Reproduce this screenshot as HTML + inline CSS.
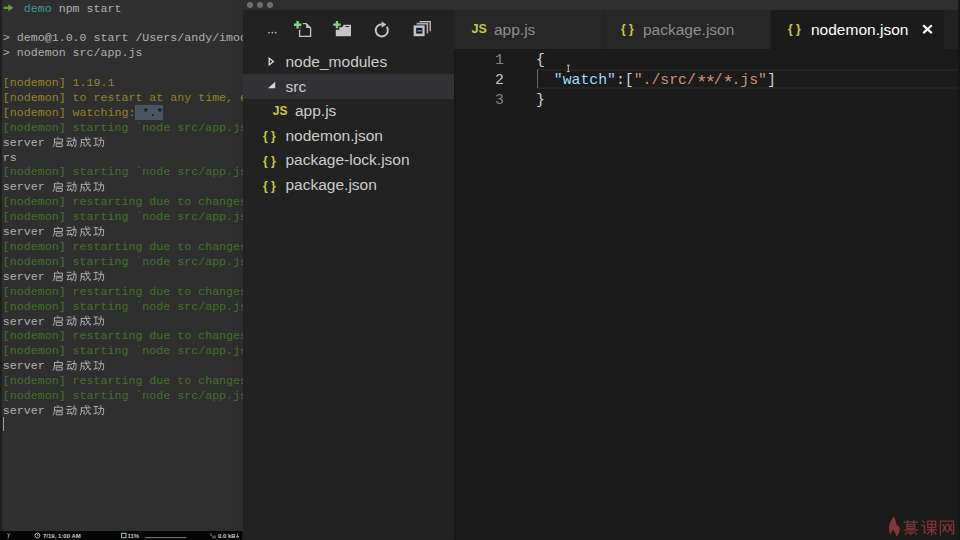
<!DOCTYPE html>
<html><head><meta charset="utf-8">
<style>
html,body{margin:0;padding:0}
body{width:960px;height:540px;overflow:hidden;position:relative;background:#1e1e1e;font-family:"Liberation Sans",sans-serif}
.abs{position:absolute}
#term{left:0;top:0;width:243px;height:531px;background:#2f2f2f;overflow:hidden}
#term .strip{left:0;top:0;width:2px;height:531px;background:#1f1f1f}
#term .shade{left:233px;top:0;width:10px;height:531px;background:rgba(0,0,0,0.03)}
#term pre{position:absolute;left:2.85px;top:1.5px;margin:0;font-family:"Liberation Mono",monospace;font-size:11.63px;line-height:14.9px;color:#b0b0b0;white-space:pre}
.g{color:#437228}.y{color:#948429}.tl{color:#3d9a98}
.hl{background:#4a5462;color:#0a0a0a;padding:1px 0}
.cj{display:inline-block;width:14px;height:10px}
#sbar{left:0;top:531px;width:242px;height:9px;background:#050505;color:#c8c8c8;font-size:6px;font-weight:bold;line-height:10px;white-space:nowrap}
#vs{left:243px;top:0;width:717px;height:540px;background:#1e1e1e}
#title{left:0;top:0;width:717px;height:10px;background:#2e2e2e}
.dot{width:6px;height:6px;border-radius:50%;background:#6e6e6e;top:1.5px}
#side{left:0;top:10px;width:211px;height:530px;background:#222222}
.row{left:0;width:211px;height:25px;color:#cccccc;font-size:15.5px;white-space:nowrap}
.row span.t{position:absolute;left:42.5px;top:4.5px}
#tabs{left:211px;top:10px;width:506px;height:39px;background:#222222}
.tab{top:0;height:39px;background:#272727;font-size:15.5px;color:#8d8d8d;white-space:nowrap}
#editor{left:211px;top:49px;width:506px;height:491px;background:#1b1b1b;box-shadow:inset 2px 0 2px -1px rgba(0,0,0,0.25)}
.code{position:absolute;font-family:"Liberation Mono",monospace;font-size:14.8px;line-height:20px;white-space:pre}
.ast{display:inline-block;width:8.88px;text-align:center;font-size:19px;line-height:10px;position:relative;top:4px}
.ic{position:absolute;font-weight:bold;color:#cbcb41;white-space:pre}
</style></head><body>
<div id="term" class="abs">
<div class="abs strip"></div>
<div class="abs shade"></div>
<pre>   <span class="tl">demo</span> npm start

&gt; demo@1.0.0 start /Users/andy/imooc/node
&gt; nodemon src/app.js

<span class="y">[nodemon] 1.19.1</span>
<span class="y">[nodemon] to restart at any time, enter `rs`</span>
<span class="y">[nodemon] watching:<span class="hl"> *.*</span></span>
<span class="g">[nodemon] starting `node src/app.js`</span>
server
rs
<span class="g">[nodemon] starting `node src/app.js`</span>
server
<span class="g">[nodemon] restarting due to changes...</span>
<span class="g">[nodemon] starting `node src/app.js`</span>
server
<span class="g">[nodemon] restarting due to changes...</span>
<span class="g">[nodemon] starting `node src/app.js`</span>
server
<span class="g">[nodemon] restarting due to changes...</span>
<span class="g">[nodemon] starting `node src/app.js`</span>
server
<span class="g">[nodemon] restarting due to changes...</span>
<span class="g">[nodemon] starting `node src/app.js`</span>
server
<span class="g">[nodemon] restarting due to changes...</span>
<span class="g">[nodemon] starting `node src/app.js`</span>
server
</pre>
<div class="abs" style="left:3px;top:417px;width:1px;height:14px;background:#9a9a9a"></div>
</div>
<div id="sbar" class="abs">
 <span class="abs" style="left:43px;top:0">7/19, 1:00 AM</span>
 <span class="abs" style="left:127.5px;top:0">11%</span>
 <span class="abs" style="left:218px;top:0">0.0 kB</span>
</div>
<div id="vs" class="abs">
 <div id="title" class="abs">
  <div class="abs dot" style="left:3.8px"></div>
  <div class="abs dot" style="left:13.6px"></div>
  <div class="abs dot" style="left:23.6px"></div>
 </div>
 <div id="side" class="abs">
  <div class="abs row" style="top:38.5px"><span class="t">node_modules</span></div>
  <div class="abs row" style="top:63.5px;background:#323236"><span class="t">src</span></div>
  <div class="abs row" style="top:87.6px"><span class="t" style="left:52px">app.js</span></div>
  <div class="abs row" style="top:112.2px"><span class="t">nodemon.json</span></div>
  <div class="abs row" style="top:136.8px"><span class="t">package-lock.json</span></div>
  <div class="abs row" style="top:161.4px"><span class="t">package.json</span></div>

  <span class="ic" style="left:29.8px;top:94.2px;font-size:12px">JS</span>
  <span class="ic" style="left:20px;top:119px;font-size:12px">{ }</span>
  <span class="ic" style="left:20px;top:144px;font-size:12px">{ }</span>
  <span class="ic" style="left:20px;top:169px;font-size:12px">{ }</span>
 </div>
 <div id="tabs" class="abs">
  <div class="abs tab" style="left:0;width:149px"><span class="abs" style="left:40px;top:11px">app.js</span></div>
  <div class="abs tab" style="left:150px;width:166px"><span class="abs" style="left:39px;top:11px">package.json</span></div>
  <div class="abs tab" style="left:317px;width:173.4px;background:#1b1b1b;color:#fff"><span class="abs" style="left:40px;top:11px">nodemon.json</span></div>

  <span class="ic" style="left:17.5px;top:12.3px;font-size:12.5px">JS</span>
  <span class="ic" style="left:167px;top:12px;font-size:12px">{ }</span>
  <span class="ic" style="left:334px;top:12px;font-size:12px">{ }</span>
 </div>
 <div id="editor" class="abs">
  <div class="abs" style="left:83px;top:20px;width:423px;height:16px;border-top:2px solid #242424;border-bottom:2px solid #242424"></div>
  <div class="abs" style="left:83px;top:20px;width:1px;height:19px;background:#6a6a6a"></div>
  <div class="code" style="left:30px;top:0.5px;width:20px;text-align:right;color:#858585">1
<span style="color:#c6c6c6">2</span>
3</div>
  <div class="code" style="left:82px;top:1px;color:#d4d4d4">{
  <span style="color:#9cdcfe">"watch"</span>:[<span style="color:#ce9178">"./src/<span class="ast">*</span><span class="ast">*</span>/<span class="ast">*</span>.js"</span>]
}</div>
 </div>
</div>
<div class="abs" style="left:958px;top:0;width:2px;height:540px;background:#161616"></div>
<svg class="abs" style="left:0;top:0" width="960" height="540" viewBox="0 0 960 540">


 <defs>
  <g id="qdcg" fill="none" stroke="#b4b4b4" stroke-width="0.95" stroke-linecap="round" stroke-linejoin="round">
   <path d="M4.5 0.2 L5.8 1.3 M1.6 2 H9.8 V5.2 H1.6 M1.6 2 V5.5 Q1.6 8.5 0.2 10 M3.8 6.8 H9.6 V9.8 H3.8 Z"/>
   <path transform="translate(14.1 0)" d="M0.6 1.2 H4.6 M0.2 4.2 H5.2 M2.6 4.2 L0.6 8.8 L5 8 M3.8 6.4 L5.2 8.6 M5.6 3 H9.8 Q9.8 8 9.2 9.8 L8 9.2 M7.8 0.2 V3.5 Q7.6 7.5 5.4 10"/>
   <path transform="translate(28.1 0)" d="M1.2 2.6 H10.4 M1.2 2.6 V6 Q1.2 8.6 0.2 10 M1.2 5.6 H4.2 V8.6 L3.4 8.6 M5.6 0.2 Q6.2 6 10.4 9.8 L10.4 8 M9.4 4.8 L5 9.8 M8 0.4 L9.2 1.4"/>
   <path transform="translate(41.9 0)" d="M0.4 1.2 H4.4 M2.4 1.2 V8 M0.2 8.8 L4.8 7.6 M5 3.2 H10.4 Q10.4 8.4 9.8 9.8 L8.6 9.2 M7.6 0.2 V3.6 Q7.4 7.6 5 10"/>
  </g>
 </defs>
 <use href="#qdcg" transform="translate(52.9 137.10) scale(0.97)"/>
 <use href="#qdcg" transform="translate(52.9 181.80) scale(0.97)"/>
 <use href="#qdcg" transform="translate(52.9 226.50) scale(0.97)"/>
 <use href="#qdcg" transform="translate(52.9 271.20) scale(0.97)"/>
 <use href="#qdcg" transform="translate(52.9 315.90) scale(0.97)"/>
 <use href="#qdcg" transform="translate(52.9 360.60) scale(0.97)"/>
 <use href="#qdcg" transform="translate(52.9 405.30) scale(0.97)"/>

 <!-- status bar icons -->
 <path d="M7.6 533.4 L8.6 535.6 L9.6 533.4 M8.6 535.6 L8 538.4" fill="none" stroke="#9a9a9a" stroke-width="0.9"/>
 <circle cx="37.4" cy="535.5" r="2.4" fill="none" stroke="#bdbdbd" stroke-width="0.9"/>
 <path d="M37.4 534.2 V535.6 H38.6" fill="none" stroke="#bdbdbd" stroke-width="0.7"/>
 <rect x="121.6" y="533.3" width="4.4" height="4.4" fill="none" stroke="#9fb3b3" stroke-width="1.1"/>
 <path d="M145 537.6 H186.6" stroke="#9a9a9a" stroke-width="0.8"/>
 <path d="M211 533.2 V536 M213 535.5 V538.4 M215 535.5 V538.4" stroke="#8a8a9a" stroke-width="1"/>
 <path d="M237.6 533.4 V537.4 M236.2 536 L237.6 537.6 L239 536" fill="none" stroke="#bdbdbd" stroke-width="0.8"/>
 <!-- logo -->
 <g fill="none" stroke="#7c3434" stroke-width="1.25" stroke-linecap="square">
  <path transform="translate(903.8 520.4)" d="M0.5 1.6 H13.6 M4 0.2 V3.4 M10 0.2 V3.4 M3 4.2 H11 V8.2 H3 Z M3 6.2 H11 M0.5 9.8 H13.6 M7 8.2 V14.2 M3.4 11.6 L1.6 13.8 M10.6 11.6 L12.4 13.8 M5 12 L5.6 13 M9 12 L8.4 13"/>
  <path transform="translate(921.7 520.4)" d="M1 0.6 L2.4 2 M0.2 5 H2.6 V12.8 L4 11.6 M6 0.8 H14 V7 H6 Z M6 3.9 H14 M10 0.8 V14.4 M5.2 9.2 H14.8 M10 9.4 L5.6 13.6 M10 9.4 L14.4 13.6"/>
  <path transform="translate(939.6 520.4)" d="M0.8 14.4 V0.8 H14 V13.4 L12.4 13.4 M3.2 4 L7 11 M7 4 L3.2 11 M8.6 4 L12.4 11 M12.4 4 L8.6 11"/>
 </g>
 <path d="M893.8 516.4 C891 520 888.6 525 888.9 529.5 C889.2 532 890 534 890.9 535.6 C891 532.5 892 530.5 893 529.8 C894.5 531 895.6 533.5 896.2 536.6 C899 534 900 531 899.6 528.4 C899.2 526.5 897.8 525.5 896.4 524.8 C896.3 521.5 895 518.5 893.8 516.4 Z" fill="#853636"/>
 <!-- sidebar more dots -->
 <circle cx="269" cy="32.6" r="0.85" fill="#c5c5c5"/>
 <circle cx="272.3" cy="32.6" r="0.85" fill="#c5c5c5"/>
 <circle cx="275.6" cy="32.6" r="0.85" fill="#c5c5c5"/>
 <!-- new file -->
 <path d="M299.6 36.3 V23.6 H306.2 L310.6 28 V36.3 Z" fill="none" stroke="#c5c5c5" stroke-width="1.3"/>
 <path d="M306.2 23.6 V28 H310.6 Z" fill="#c5c5c5"/>
 <path d="M297.6 19.5 V29.9 M292.4 24.7 H302.8" stroke="#232323" stroke-width="4.6"/>
 <path d="M297.6 21 V28.4 M293.9 24.7 H301.3" stroke="#89d185" stroke-width="2.4"/>
 <!-- new folder -->
 <path d="M335.8 36.2 V27.2 H342 L343.8 24.8 H351 V36.2 Z" fill="#c5c5c5"/>
 <path d="M345.4 26.6 H349.2" stroke="#2a2a2a" stroke-width="1"/>
 <path d="M337 19.4 V29.8 M331.8 24.6 H342.2" stroke="#232323" stroke-width="4.6"/>
 <path d="M337 20.9 V28.3 M333.3 24.6 H340.7" stroke="#89d185" stroke-width="2.4"/>
 <!-- refresh -->
 <path d="M381.8 24.2 A6.1 6.1 0 1 0 386.8 26.8" fill="none" stroke="#c5c5c5" stroke-width="1.9"/>
 <path d="M381.6 21.6 L386.4 24.6 L381.6 27.8 Z" fill="#c5c5c5"/>
 <!-- collapse all -->
 <path d="M419.6 21.6 H430.2 V31.2" fill="none" stroke="#c5c5c5" stroke-width="1.3"/>
 <path d="M416.6 23.6 H427.4 V33.4" fill="none" stroke="#a9a9a9" stroke-width="1.6"/>
 <rect x="413.6" y="25.4" width="11" height="10.8" fill="#c5c5c5"/>
 <rect x="416.2" y="27.8" width="6.2" height="5.8" fill="#0f1a26"/>
 <rect x="417.4" y="30.1" width="4.2" height="1.3" fill="#7f9fbf"/>
 <!-- tree twisties -->
 <path d="M269.2 58.2 L273.4 61.6 L269.2 65 Z" fill="none" stroke="#dedede" stroke-width="1.3"/>
 <path d="M275.2 81.8 V88.2 H268 Z" fill="#d6d6d6"/>
 <!-- close x -->
 <path d="M923.2 25.3 L931.8 33.1 M931.8 25.3 L923.2 33.1" stroke="#ffffff" stroke-width="2.2"/>
 <!-- mouse ibeam -->
 <path d="M568.3 65.2 V71.6 M566.8 65.2 H569.8 M566.8 71.6 H569.8" stroke="#c8c8c8" stroke-width="0.9"/>
 <!-- terminal arrow -->
 <path d="M3.5 7.8 H10" stroke="#6a9f3a" stroke-width="2.2"/>
 <path d="M8.3 4.3 L13.4 7.8 L8.3 11.3 Z" fill="#6a9f3a"/>
</svg>
</body></html>
